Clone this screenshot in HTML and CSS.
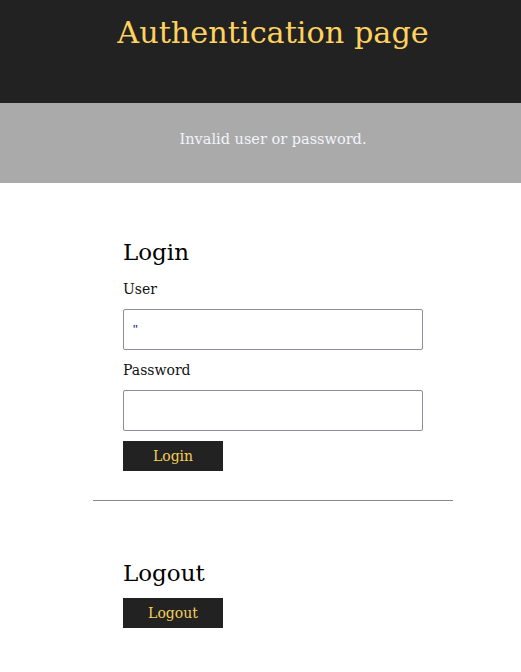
FILE: index.html
```html
<!DOCTYPE html>
<html>
<head>
<meta charset="utf-8">
<link rel="stylesheet" href="styles.css">
</head>
<body>
<header class="top">
  <h1 class="title">Authentication page</h1>
</header>
<div class="notice">Invalid user or password.</div>
<main class="main">
  <section class="panel">
    <h2 class="heading">Login</h2>
    <form class="form">
      <label class="label" for="user">User</label>
      <input class="field" id="user" type="text" value="&quot;">
      <label class="label" for="pass">Password</label>
      <input class="field" id="pass" type="password">
      <button class="btn" type="button">Login</button>
    </form>
  </section>
  <hr class="rule">
  <section class="panel panel-logout">
    <h2 class="heading">Logout</h2>
    <button class="btn" type="button">Logout</button>
  </section>
</main>
</body>
</html>
```
FILE: styles.css
```css
html, body {
  margin: 0;
  padding: 0;
  background: #fff;
  font-family: "DejaVu Serif", serif;
  color: #111;
}
.top {
  background: #222;
  height: 103px;
  padding-left: 25px;
  display: flex;
  justify-content: center;
}
.title {
  margin: 12px 0 0;
  font-weight: 400;
  font-size: 30.3px;
  line-height: 42px;
  color: #ffd25e;
}
.notice {
  background: #aaa;
  height: 72px;
  padding: 0 0 8px 25px;
  display: flex;
  align-items: center;
  justify-content: center;
  color: #f2f4fa;
  font-size: 14.5px;
}
.main {
  width: 360px;
  margin-left: 93px;
}
.panel {
  padding: 52px 30px 0;
}
.heading {
  margin: 0;
  font-size: 23px;
  font-weight: 400;
  line-height: 34px;
  color: #000;
}
.form {
  display: flex;
  flex-direction: column;
  align-items: flex-start;
}
.label {
  font-size: 14px;
  line-height: 20px;
  margin: 10px 0 0;
}
.field {
  box-sizing: border-box;
  width: 300px;
  height: 41px;
  margin: 10px 0 0;
  border: 1px solid #8e8ca4;
  border-radius: 2px;
  padding: 0 9px;
  font-family: "Liberation Sans", sans-serif;
  font-size: 13px;
  color: #1a1a8a;
  background: #fff;
}
.btn {
  width: 100px;
  height: 30px;
  margin-top: 10px;
  border: 0;
  border-radius: 0;
  background: #222;
  color: #f5cf5a;
  font-family: "DejaVu Serif", serif;
  font-size: 14px;
  padding: 0;
}
.rule {
  margin: 29px 0 0;
  border: 0;
  border-top: 1px solid #8a8a8a;
  height: 0;
}
.panel-logout {
  padding-top: 55px;
}
.panel-logout .btn {
  margin-top: 8px;
}
```
